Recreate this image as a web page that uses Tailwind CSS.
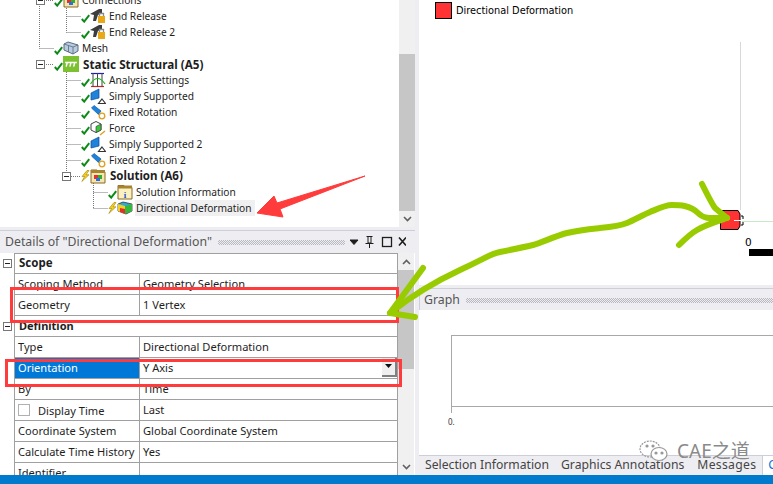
<!DOCTYPE html>
<html lang="en">
<head>
<meta charset="UTF-8">
<title>Mechanical Details</title>
<script src="https://cdn.jsdelivr.net/npm/@tailwindcss/browser@4"></script>
</head>
<body class="bg-white overflow-hidden font-['Noto_Sans','Open_Sans',sans-serif] text-[#1e1e1e]">
<svg width="0" height="0" class="absolute">
  <defs>
    <symbol id="chk" viewBox="0 0 9 9"><path d="M0.8 5 L3.2 7.6 L8.2 1.2" fill="none" stroke="#0a8a16" stroke-width="2"/></symbol>
    <symbol id="bolt" viewBox="0 0 9 12"><path d="M6 0.5 L1 6.5 L3.6 6.5 L0.8 11.5 L8 4.8 L5 4.8 L8 0.5Z" fill="#f5d020" stroke="#a08000" stroke-width="0.6"/></symbol>
    <symbol id="release" viewBox="0 0 16 16"><path d="M0 6 L9 1 L12 1 L12 5 L8 7 L6 13 L3 13 L4 7Z" fill="#3c3c3c"/><rect x="8" y="8" width="7" height="7" fill="#e8a818"/><path d="M9.5 8 V5.5 H13.5 V8" fill="none" stroke="#8a8a8a" stroke-width="1.3"/></symbol>
    <symbol id="mesh" viewBox="0 0 16 14"><path d="M1 3 L5 1 L15 4 L15 10 L10 13 L1 9Z" fill="#b8cce0" stroke="#5a6a80"/><path d="M1 3 L10 6 L15 4 M10 6 V13 M5.5 4.5 V11" fill="none" stroke="#5a6a80" stroke-width="0.8"/></symbol>
    <symbol id="static" viewBox="0 0 15 15"><rect width="15" height="15" fill="#7cc230"/><path d="M2 6 H13 M4 6 L3 10 M7.5 6 L6.5 10 M11 6 L10 10" stroke="#fff" stroke-width="1.4" fill="none"/></symbol>
    <symbol id="settings" viewBox="0 0 16 16"><path d="M1 14.5 H14" stroke="#e02020" stroke-width="1.2"/><path d="M1 1.5 H14" stroke="#1818d0" stroke-width="1.2"/><path d="M3 1 V15 M7.500 1 V15 M12 1 V15" stroke="#444" stroke-width="1"/><path d="M0.500 12 Q7.500 1 15 12" fill="none" stroke="#18b818" stroke-width="1.2"/></symbol>
    <symbol id="support" viewBox="0 0 16 16"><path d="M1 5 L9 1 L9 10 L1 12Z" fill="#1f82dc" stroke="#0a4a90" stroke-width="0.7"/><path d="M12 11 L15.500 15.500 H8.500Z" fill="#fff" stroke="#333" stroke-width="1.2"/></symbol>
    <symbol id="rotation" viewBox="0 0 16 16"><path d="M1.500 4 L4 1.500 L11 7 L8.500 10.500Z" fill="#1f82dc" stroke="#0a5aa0" stroke-width="0.7"/><circle cx="12" cy="12" r="2.800" fill="none" stroke="#e0a020" stroke-width="1.300"/></symbol>
    <symbol id="force" viewBox="0 0 16 16"><path d="M1 4 L6 1.500 L11 4 L11 10 L6 12.500 L1 10Z" fill="#fff" stroke="#444"/><path d="M6 6.500 L11 4 L11 10 L6 12.500Z" fill="#38c838" stroke="#444" stroke-width="0.7"/><path d="M15 11 L10 15" stroke="#e0a020" stroke-width="1.500"/></symbol>
    <symbol id="solution" viewBox="0 0 16 16"><path d="M1 4 V2 H7 L8 4 H15 V15 H1Z" fill="#f5e6b0" stroke="#8a6a20"/><rect x="1" y="2" width="14" height="3" fill="#a88430"/><rect x="4" y="7" width="4" height="4" fill="#e03030"/><rect x="8" y="7" width="4" height="4" fill="#30b030"/><rect x="6" y="10" width="4" height="3" fill="#2a70d8"/></symbol>
    <symbol id="info" viewBox="0 0 16 16"><path d="M1 4 V1.500 H7 L8 3.500 H15 V15 H1Z" fill="#fbf0c0" stroke="#8a6a20"/><rect x="1" y="1.500" width="14" height="3" fill="#a88430"/><text x="8" y="13.500" text-anchor="middle" font-size="9" font-weight="700" fill="#1a50c8" font-family="Liberation Serif">i</text></symbol>
    <symbol id="deform" viewBox="0 0 16 14"><path d="M1 3 L6 1 L15 3 L15 10 L9 13 L1 10Z" fill="#30a8d8" stroke="#222" stroke-width="0.7"/><path d="M1 3 L8 5 L8 13 L1 10Z" fill="#f0d020"/><path d="M8 5 L15 3 L15 10 L8 13Z" fill="#38b838"/><path d="M3 7 L8 8 L8 13 L3 11Z" fill="#e03030"/></symbol>
    <symbol id="minus" viewBox="0 0 9 9"><rect x="0.500" y="0.500" width="8" height="8" fill="#fff" stroke="#777"/><path d="M2 4.500 H7" stroke="#222"/></symbol>
  </defs>
</svg>

<div class="relative w-[773px] h-[484px] overflow-hidden">
  <div class="flex h-[475px]">
    <!-- left column -->
    <div class="w-[419px] shrink-0 flex flex-col bg-[#eeeef2]">
      <!-- tree -->
      <div class="h-[227px] flex bg-white overflow-hidden">
        <div class="relative w-[399px] text-[10.200px] leading-4 -mt-2">
          <svg class="absolute left-0 top-0" width="130" height="235" fill="none" stroke="#777" stroke-dasharray="1 1">
            <path d="M39.500 12 V56.500 M44 8.500 H54 M39.500 56.500 H54 M66.500 8 V40.500 M66.500 24.500 H81 M66.500 40.500 H81"/>
            <path d="M44 72.500 H54 M66.500 76 V180 M66.500 88.500 H81 M66.500 104.500 H81 M66.500 120.500 H81 M66.500 136.500 H81 M66.500 152.500 H81 M66.500 168.500 H81 M71 184.500 H81 M93.500 189 V216.500 M93.500 200.500 H108 M93.500 216.500 H108"/>
          </svg>
          <svg class="absolute left-[36px] top-[4px]" width="9" height="9"><use href="#minus"/></svg>
          <svg class="absolute left-[36px] top-[68px]" width="9" height="9"><use href="#minus"/></svg>
          <svg class="absolute left-[62px] top-[180px]" width="9" height="9"><use href="#minus"/></svg>

          <div class="relative flex items-center h-4 pl-[54px]"><svg class="w-[9px] h-[9px] mt-1"><use href="#chk"/></svg><svg class="w-4 h-4 mr-[3px]"><use href="#solution"/></svg><span>Connections</span></div>
          <div class="relative flex items-center h-4 pl-[81px]"><svg class="w-[9px] h-[9px] mt-1"><use href="#chk"/></svg><svg class="w-4 h-4 mr-[3px]"><use href="#release"/></svg><span>End Release</span></div>
          <div class="relative flex items-center h-4 pl-[81px]"><svg class="w-[9px] h-[9px] mt-1"><use href="#chk"/></svg><svg class="w-4 h-4 mr-[3px]"><use href="#release"/></svg><span>End Release 2</span></div>
          <div class="relative flex items-center h-4 pl-[54px]"><svg class="w-[9px] h-[9px] mt-1"><use href="#chk"/></svg><svg class="w-4 h-4 mr-[3px]"><use href="#mesh"/></svg><span>Mesh</span></div>
          <div class="relative flex items-center h-4 pl-[54px]"><svg class="w-[9px] h-[9px] mt-1"><use href="#chk"/></svg><svg class="w-4 h-4 mr-[4px]"><use href="#static"/></svg><span class="font-bold text-[11.700px] -mt-px">Static Structural (A5)</span></div>
          <div class="relative flex items-center h-4 pl-[81px]"><svg class="w-[9px] h-[9px] mt-1"><use href="#chk"/></svg><svg class="w-4 h-4 mr-[3px]"><use href="#settings"/></svg><span>Analysis Settings</span></div>
          <div class="relative flex items-center h-4 pl-[81px]"><svg class="w-[9px] h-[9px] mt-1"><use href="#chk"/></svg><svg class="w-4 h-4 mr-[3px]"><use href="#support"/></svg><span>Simply Supported</span></div>
          <div class="relative flex items-center h-4 pl-[81px]"><svg class="w-[9px] h-[9px] mt-1"><use href="#chk"/></svg><svg class="w-4 h-4 mr-[3px]"><use href="#rotation"/></svg><span>Fixed Rotation</span></div>
          <div class="relative flex items-center h-4 pl-[81px]"><svg class="w-[9px] h-[9px] mt-1"><use href="#chk"/></svg><svg class="w-4 h-4 mr-[3px]"><use href="#force"/></svg><span>Force</span></div>
          <div class="relative flex items-center h-4 pl-[81px]"><svg class="w-[9px] h-[9px] mt-1"><use href="#chk"/></svg><svg class="w-4 h-4 mr-[3px]"><use href="#support"/></svg><span>Simply Supported 2</span></div>
          <div class="relative flex items-center h-4 pl-[81px]"><svg class="w-[9px] h-[9px] mt-1"><use href="#chk"/></svg><svg class="w-4 h-4 mr-[3px]"><use href="#rotation"/></svg><span>Fixed Rotation 2</span></div>
          <div class="relative flex items-center h-4 pl-[81px]"><svg class="w-[9px] h-3"><use href="#bolt"/></svg><svg class="w-4 h-4 mr-[4px]"><use href="#solution"/></svg><span class="font-bold text-[11.500px]">Solution (A6)</span></div>
          <div class="relative flex items-center h-4 pl-[108px]"><svg class="w-[9px] h-[9px] mt-1"><use href="#chk"/></svg><svg class="w-4 h-4 mr-[3px]"><use href="#info"/></svg><span>Solution Information</span></div>
          <div class="relative flex items-center h-4 pl-[108px]"><svg class="w-[9px] h-3"><use href="#bolt"/></svg><svg class="w-4 h-4 mr-[2px]"><use href="#deform"/></svg><span class="bg-[#f0f0f0] pl-px pr-[3px]">Directional Deformation</span></div>
        </div>
        <!-- tree scrollbar -->
        <div class="w-[16px] flex flex-col bg-[#f0f0f0]">
          <div class="h-[54px]"></div>
          <div class="h-[157px] bg-[#c6c6c6]"></div>
          <div class="flex-1 flex items-center justify-center"><svg width="9" height="6" fill="none" stroke="#606060" stroke-width="1.600"><path d="M1 1 L4.500 4.500 L8 1"/></svg></div>
        </div>
        <div class="w-[4px] bg-[#eeeef2]"></div>
      </div>

      <!-- details -->
      <div class="mt-[3px] w-[415px] flex-1 flex flex-col border-t border-[#ccced8] overflow-hidden">
        <div class="h-[22px] flex items-center pl-[5px] text-[12.300px] text-[#555]">
          <span class="whitespace-nowrap">Details of "Directional Deformation"</span>
          <div class="ml-[6px] w-[127px] h-[5px] bg-[repeating-conic-gradient(#b8b8c0_0_25%,transparent_0_50%)] bg-[length:2px_2px]"></div>
          <svg class="ml-[5px]" width="56" height="14" fill="none" stroke="#1e1e1e">
            <path d="M0 5 H8 L4 9.500Z" fill="#1e1e1e"/>
            <path d="M16.500 1.500 H22.500 M18 1.500 V8 H21 V1.500 M15.500 8.500 H23.500 M19.500 8.500 V13" />
            <rect x="32.500" y="2.500" width="9" height="9" stroke-width="1.300"/>
            <path d="M49 2.500 L56 10.500 M56 2.500 L49 10.500" stroke-width="1.600"/>
          </svg>
        </div>
        <div class="flex flex-1 bg-white overflow-hidden text-[11.100px] leading-[19px]">
          <div class="w-[398px] shrink-0">
            <div class="flex h-[21px]"><div class="w-[14px] flex items-center justify-center"><svg width="9" height="9"><use href="#minus"/></svg></div><div class="flex-1 border-y border-r border-l border-[#a0a0a0] pl-[4px] font-bold text-[11.500px] leading-[18px]">Scope</div></div>
            <div class="flex h-[21px]"><div class="w-[14px]"></div><div class="w-[126px] border-l border-r border-b border-[#a0a0a0] pl-[3px]">Scoping Method</div><div class="flex-1 border-r border-b border-[#a0a0a0] pl-[3px]">Geometry Selection</div></div>
            <div class="flex h-[21px]"><div class="w-[14px]"></div><div class="w-[126px] border-l border-r border-b border-[#a0a0a0] pl-[3px]">Geometry</div><div class="flex-1 border-r border-b border-[#a0a0a0] pl-[3px]">1 Vertex</div></div>
            <div class="flex h-[21px]"><div class="w-[14px] flex items-center justify-center"><svg width="9" height="9"><use href="#minus"/></svg></div><div class="flex-1 border-r border-l border-b border-[#a0a0a0] pl-[4px] font-bold text-[11px]">Definition</div></div>
            <div class="flex h-[21px]"><div class="w-[14px]"></div><div class="w-[126px] border-l border-r border-b border-[#a0a0a0] pl-[3px]">Type</div><div class="flex-1 border-r border-b border-[#a0a0a0] pl-[3px]">Directional Deformation</div></div>
            <div class="flex h-[21px]"><div class="w-[14px]"></div><div class="w-[126px] border-l border-r border-b border-[#a0a0a0] bg-[#0078d7] text-white pl-[3px]">Orientation</div><div class="relative flex-1 border-r border-b border-[#a0a0a0] pl-[3px]">Y Axis<div class="absolute right-0 top-0 w-[15px] h-[19px] bg-[#f0f0f0] border-r-2 border-b-2 border-[#808080] flex items-center justify-center"><svg width="8" height="5"><path d="M0 0 H7 L3.500 4Z" fill="#111"/></svg></div></div></div>
            <div class="flex h-[21px]"><div class="w-[14px]"></div><div class="w-[126px] border-l border-r border-b border-[#a0a0a0] pl-[3px]">By</div><div class="flex-1 border-r border-b border-[#a0a0a0] pl-[3px]">Time</div></div>
            <div class="flex h-[21px]"><div class="w-[14px]"></div><div class="w-[126px] border-l border-r border-b border-[#a0a0a0] pl-[3px] flex items-center"><span class="w-[12px] h-[12px] border border-[#b0b0b0] mr-[8px]"></span>Display Time</div><div class="flex-1 border-r border-b border-[#a0a0a0] pl-[3px]">Last</div></div>
            <div class="flex h-[21px]"><div class="w-[14px]"></div><div class="w-[126px] border-l border-r border-b border-[#a0a0a0] pl-[3px]">Coordinate System</div><div class="flex-1 border-r border-b border-[#a0a0a0] pl-[3px]">Global Coordinate System</div></div>
            <div class="flex h-[21px]"><div class="w-[14px]"></div><div class="w-[126px] border-l border-r border-b border-[#a0a0a0] pl-[3px] whitespace-nowrap">Calculate Time History</div><div class="flex-1 border-r border-b border-[#a0a0a0] pl-[3px]">Yes</div></div>
            <div class="flex h-[21px]"><div class="w-[14px]"></div><div class="w-[126px] border-l border-r border-b border-[#a0a0a0] pl-[3px]">Identifier</div><div class="flex-1 border-r border-b border-[#a0a0a0] pl-[3px]"></div></div>
          </div>
          <div class="w-[16px] flex flex-col bg-[#f0f0f0]">
            <div class="h-[17px] flex items-center justify-center"><svg width="9" height="6" fill="none" stroke="#606060" stroke-width="1.600"><path d="M1 5 L4.500 1.500 L8 5"/></svg></div>
            <div class="h-[99px] bg-[#c6c6c6]"></div>
            <div class="flex-1 flex items-end justify-center pb-[5px]"><svg width="9" height="6" fill="none" stroke="#606060" stroke-width="1.600"><path d="M1 1 L4.500 4.500 L8 1"/></svg></div>
          </div>
        </div>
      </div>
    </div>

    <!-- right column -->
    <div class="flex-1 flex flex-col min-w-0">
      <!-- geometry view -->
      <div class="relative h-[285px] bg-white">
        <div class="flex items-center pl-[16px] pt-[2px] font-['DejaVu_Sans',sans-serif] text-[9.800px] text-black">
          <span class="w-[17px] h-[17px] bg-[#ff3333] border border-black mr-[4px]"></span><span class="mt-[2px]">Directional Deformation</span>
        </div>
        <div class="absolute left-[321px] top-[42px] h-[168px] w-px bg-[#d8d8d8]"></div>
        <div class="absolute left-[323px] top-[221px] w-[31px] h-px bg-[#c8e8c8]"></div>
        <svg class="absolute left-[300px] top-[209px]" width="26" height="23"><path d="M1.500 1.500 H19 L21 5 V17 L19 20.500 H1.500Z" fill="#ff3333" stroke="#000"/><path d="M15 11.500 H24" stroke="#fff"/><path d="M22 7 h2 v3 M22 16 h2 v-3" stroke="#000" fill="none"/></svg>
        <span class="absolute left-[326px] top-[235px] font-['DejaVu_Sans',sans-serif] text-[10.500px] leading-[14px] text-black">0</span>
        <div class="absolute left-[330px] top-[249px] w-[24px] h-[7px] bg-black"></div>
      </div>
      <!-- graph -->
      <div class="h-[4px] bg-[#eeeef2] border-b border-[#ccced8]"></div>
      <div class="h-[21px] flex items-center bg-[#eeeef2] border-l border-[#ccced8] pl-[4px] pt-px text-[12.300px] text-[#555]">
        <span>Graph</span>
        <div class="ml-[6px] flex-1 h-[5px] bg-[repeating-conic-gradient(#b8b8c0_0_25%,transparent_0_50%)] bg-[length:2px_2px]"></div>
      </div>
      <div class="relative flex-1 bg-white">
        <div class="absolute left-[32px] top-[25px] right-0 h-[72px] border-l border-t border-b border-[#a8a8a8]"></div>
        <div class="absolute left-[32px] top-[96px] h-[7px] w-px bg-[#a8a8a8]"></div>
        <span class="absolute left-[29px] top-[107px] text-[8px] leading-[10px] text-[#333]">0.</span>
      </div>
      <!-- tabs -->
      <div class="h-[20px] flex items-center bg-[#eeeef2] border-t border-[#ccced8] pl-[6px] text-[12.200px] text-[#444] whitespace-nowrap overflow-hidden">
        <span>Selection Information</span>
        <span class="ml-[12px]">Graphics Annotations</span>
        <span class="ml-[13px] tracking-[0.3px]">Messages</span>
        <span class="ml-[6px] h-full bg-white border-l border-[#ccced8] pl-[5px] text-[#0078d7]">C</span>
      </div>
    </div>
  </div>
  <!-- status bar -->
  <div class="h-[9px] bg-[#007acc]"></div>

  <!-- hand-drawn annotations over the screenshot -->
  <svg class="absolute left-0 top-0" width="773" height="484" fill="none">
    <rect x="11.500" y="288.500" width="386" height="33" stroke="#ff3b3b" stroke-width="3"/>
    <rect x="6.500" y="360.500" width="394" height="25" stroke="#ff3b3b" stroke-width="3"/>
    <path d="M257 213 L274 196 L277 203 L365 176 L280 209 L283 217Z" fill="#ff3b3b" stroke="#ff3b3b"/>
    <g stroke="#99cc00" stroke-width="6" stroke-linecap="round" stroke-linejoin="round">
      <path d="M390 313 C410 297 430 284 460 270 S490 254 500 252 S525 247 533 245 S555 236 567 233 S590 229 600 228 S622 225 627 223 S645 214 650 212 S665 205 672 205 S690 205 698 213 S715 217 727 218"/>
      <path d="M423 268 L390 313 L415 317"/>
      <path d="M702 184 C708 196 712 204 715 208 L727 218 C715 222 705 225 697 230 C690 234 684 240 679 245"/>
    </g>
  </svg>
  <!-- watermark -->
  <div class="absolute left-[639px] top-[439px] flex items-center gap-[8px] text-[#8a8a8a]">
    <svg width="30" height="22" fill="none" stroke="#999" stroke-width="1.200"><ellipse cx="11" cy="9" rx="10" ry="8" stroke-dasharray="2 1"/><ellipse cx="20" cy="14" rx="8" ry="6.500" fill="#fff"/><circle cx="8" cy="6" r="1" fill="#777"/><circle cx="14" cy="6" r="1" fill="#777"/><circle cx="17" cy="13" r="1" fill="#777"/><circle cx="23" cy="13" r="1" fill="#777"/></svg>
    <span class="font-['Noto_Sans','Noto_Sans_CJK_SC',sans-serif] text-[19px] leading-[24px] whitespace-nowrap">CAE之道</span>
  </div>
</div>
</body>
</html>
